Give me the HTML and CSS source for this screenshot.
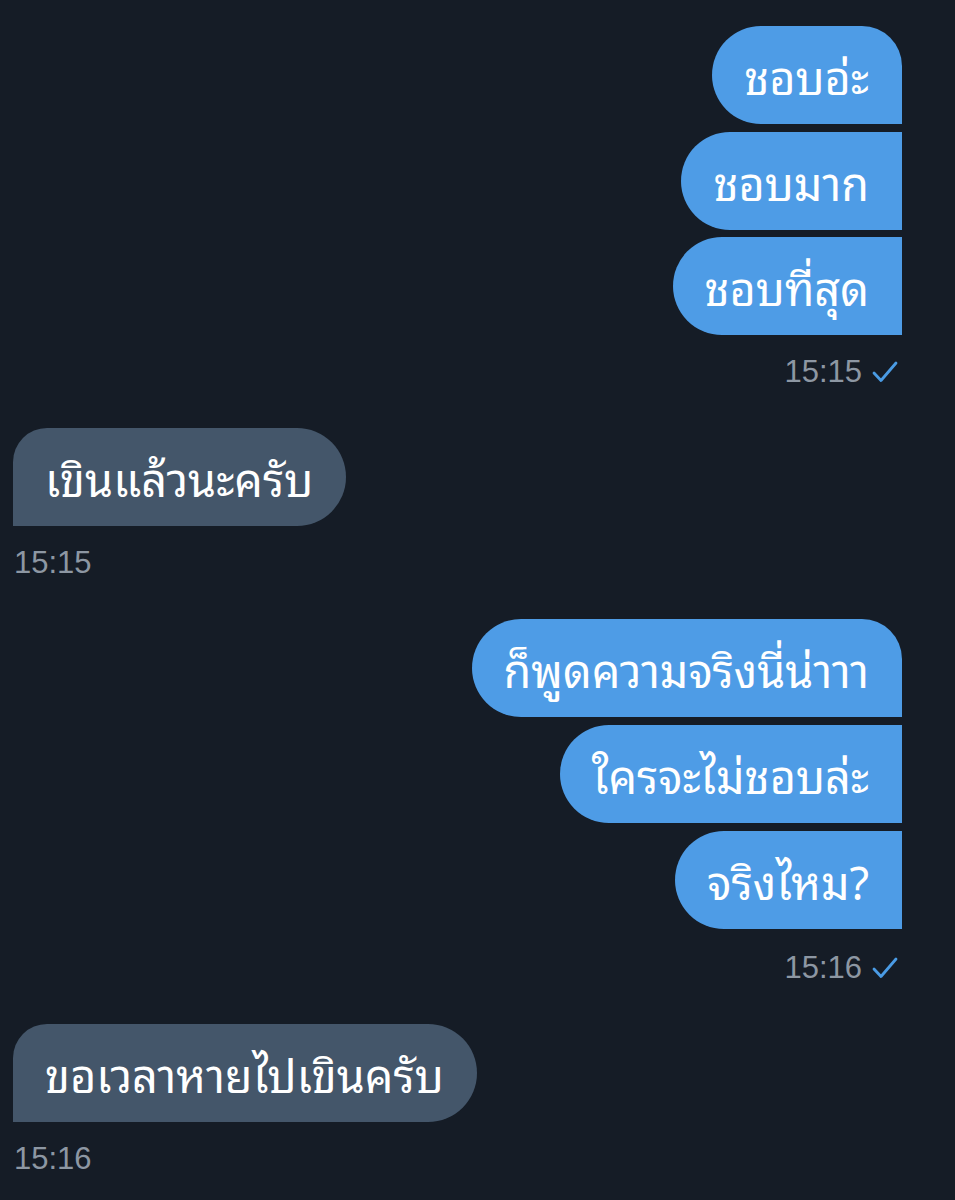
FILE: index.html
```html
<!DOCTYPE html>
<html lang="th">
<head>
<meta charset="utf-8">
<link rel="stylesheet" href="styles.css">
</head>
<body>
<div class="chat">
  <div class="group sent">
    <div class="bubble">ชอบอ่ะ</div>
    <div class="bubble">ชอบมาก</div>
    <div class="bubble">ชอบที่สุด</div>
    <div class="time">15:15 <svg class="check" viewBox="0 0 26 22" width="26" height="22"><path d="M2 12 L9 19.5 L24 2" fill="none" stroke="#4a9be4" stroke-width="2.8" stroke-linecap="round" stroke-linejoin="round"/></svg></div>
  </div>
  <div class="group recv">
    <div class="bubble">เขินแล้วนะครับ</div>
    <div class="time">15:15</div>
  </div>
  <div class="group sent later">
    <div class="bubble">ก็พูดความจริงนี่น่าาา</div>
    <div class="bubble">ใครจะไม่ชอบล่ะ</div>
    <div class="bubble">จริงไหม?</div>
    <div class="time">15:16 <svg class="check" viewBox="0 0 26 22" width="26" height="22"><path d="M2 12 L9 19.5 L24 2" fill="none" stroke="#4a9be4" stroke-width="2.8" stroke-linecap="round" stroke-linejoin="round"/></svg></div>
  </div>
  <div class="group recv">
    <div class="bubble">ขอเวลาหายไปเขินครับ</div>
    <div class="time">15:16</div>
  </div>
</div>
</body>
</html>
```
FILE: styles.css
```css
html, body {
  margin: 0;
  padding: 0;
  background: #151c26;
}
.chat {
  width: 955px;
  height: 1200px;
  box-sizing: border-box;
  padding: 26px 53px 0 13px;
  display: flex;
  flex-direction: column;
  gap: 36px;
  font-family: "Noto Sans Thai Looped", "Noto Serif Thai", "Loma", "Garuda", "Noto Sans Thai", "Noto Sans", sans-serif;
}
.group {
  display: flex;
  flex-direction: column;
  gap: 7.5px;
}
.group.later { gap: 8px; }
.group.sent { align-items: flex-end; }
.group.recv { align-items: flex-start; }
.bubble {
  height: 98px;
  box-sizing: border-box;
  display: flex;
  align-items: center;
  padding: 0 33px 0 32px;
  font-size: 45px;
  color: #ffffff;
  white-space: nowrap;
}
.sent .bubble {
  background: #4e9ce6;
  border-radius: 49px 0 0 49px;
}
.sent .bubble:first-child {
  border-top-right-radius: 40px;
}
.recv .bubble {
  background: #44566a;
  border-radius: 34px 49px 49px 0;
}
.time {
  margin-top: 9.5px;
  height: 40px;
  line-height: 40px;
  font-family: "Liberation Sans", Arial, sans-serif;
  font-size: 31px;
  color: #8d97a3;
  display: flex;
  align-items: center;
  gap: 10px;
}
.later .time { margin-top: 11px; }
.recv .time { margin-left: 1px; }
.sent .time { margin-right: 4px; }
.check { display: block; }
```
